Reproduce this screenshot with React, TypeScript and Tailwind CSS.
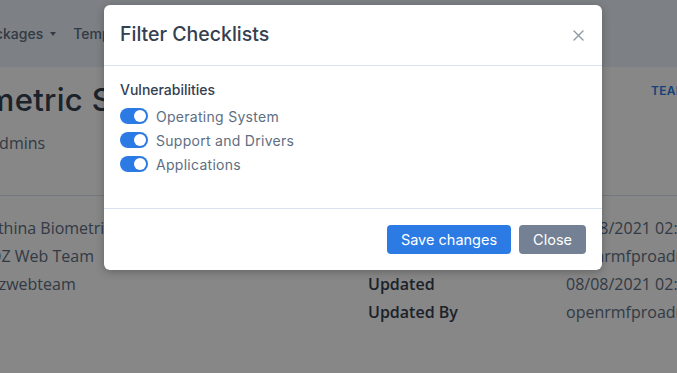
import React from 'react';

const toggles = ['Operating System', 'Support and Drivers', 'Applications'];

const rows = [
  { left: 'athina Biometrics', label: 'Created', value: '08/08/2021 02:14 PM' },
  { left: 'OZ Web Team', label: 'Created By', value: 'openrmfproadmin' },
  { left: 'ozwebteam', label: 'Updated', value: '08/08/2021 02:15 PM' },
  { left: '', label: 'Updated By', value: 'openrmfproadmin' },
];

const Toggle = () => (
  <span className="flex h-4 w-7 shrink-0 items-center justify-end rounded-full bg-[#2c7be5] px-[2px]">
    <span className="h-3 w-3 rounded-full bg-white" />
  </span>
);

const Caret = () => (
  <span className="mt-[1px] border-x-[3.5px] border-t-[4px] border-x-transparent border-t-[#5e6e82]" />
);

export default function App() {
  return (
    <div className="relative h-[373px] w-[677px] overflow-hidden bg-[#edf2f9] font-['Open_Sans',sans-serif]">
      {/* navbar */}
      <div className="flex h-[67px] items-center whitespace-nowrap font-['Inter',sans-serif] text-[14px] font-medium text-[#5e6e82]">
        <div className="-ml-[22px] flex items-center gap-[17px]">
          <span className="flex items-center gap-[7px]">
            Packages
            <Caret />
          </span>
          <span className="flex items-center gap-[7px]">
            Templates
            <Caret />
          </span>
        </div>
      </div>

      {/* card */}
      <div className="h-[306px] bg-white">
        <div className="flex pt-[18px] whitespace-nowrap">
          <div className="w-[651px] shrink-0 overflow-hidden">
            <h2 className="-ml-[61px] font-['Inter',sans-serif] text-[31px] leading-[30px] font-medium tracking-[0.01em] text-[#344050]">
              Biometric Scanner
            </h2>
            <p className="mt-[16px] -ml-[11px] text-[16px] leading-6 text-[#5e6e82]">Admins</p>
          </div>
          <span className="mt-[-3px] font-['Inter',sans-serif] text-[12px] font-semibold tracking-wide text-[#2c7be5]">
            TEAM
          </span>
        </div>

        <div className="mt-[40px] h-px w-full bg-[#d8e2ef]" />

        <div className="flex pt-[18px] whitespace-nowrap text-[16px] leading-[28px]">
          <div className="-ml-[11px] w-[379px] shrink-0 text-[#5e6e82]">
            {rows.map((r) => (
              <div key={r.label} className="h-[28px]">{r.left}</div>
            ))}
          </div>
          <div className="w-[198px] shrink-0 font-semibold text-[#344050]">
            {rows.map((r) => (
              <div key={r.label}>{r.label}</div>
            ))}
          </div>
          <div className="text-[#5e6e82]">
            {rows.map((r) => (
              <div key={r.label}>{r.value}</div>
            ))}
          </div>
        </div>
      </div>

      {/* backdrop */}
      <div className="absolute inset-0 bg-black/[.47]" />

      {/* modal */}
      <div className="absolute left-[104px] top-[5px] w-[498px] rounded-md bg-white font-['Inter',sans-serif] shadow-[0_2px_8px_rgba(0,0,0,0.25)]">
        <div className="flex h-[61px] items-center justify-between border-b border-[#d8e2ef] px-4">
          <h5 className="text-[19.5px] font-medium text-[#344050]">Filter Checklists</h5>
          <button className="mr-[2px] text-[#8d99a8]">
            <svg width="11" height="11" viewBox="0 0 11 11" fill="none" stroke="currentColor" strokeWidth="1.4" strokeLinecap="round">
              <path d="M1 1l9 9M10 1l-9 9" />
            </svg>
          </button>
        </div>

        <div className="px-4 pt-[14px] pb-[32px]">
          <div className="mb-[4px] text-[14px] leading-5 font-medium text-[#344050]">Vulnerabilities</div>
          {toggles.map((t) => (
            <label key={t} className="flex h-6 items-center gap-2 text-[14px] tracking-[0.02em] text-[#5e6e82]">
              <Toggle />
              {t}
            </label>
          ))}
        </div>

        <div className="flex h-[62px] items-center justify-end gap-2 border-t border-[#d8e2ef] px-4">
          <button className="h-[29px] rounded bg-[#2c7be5] px-[14px] text-[14.5px] text-white">
            Save changes
          </button>
          <button className="h-[29px] rounded bg-[#748194] px-[14px] text-[14.5px] text-white">
            Close
          </button>
        </div>
      </div>
    </div>
  );
}
